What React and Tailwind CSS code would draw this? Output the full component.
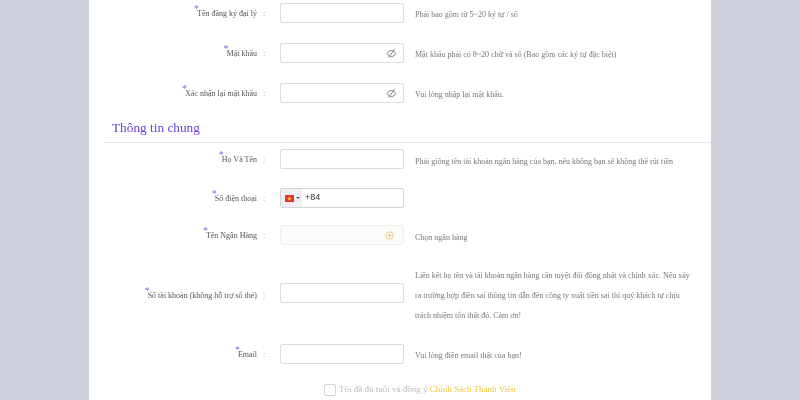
import React from 'react';

function EyeOff() {
  return (
    <svg width="11" height="11" viewBox="0 0 12 12" fill="none" stroke="#777" strokeWidth="1" className="shrink-0">
      <path d="M1.200 6c1.300-2.200 2.900-3.300 4.800-3.300s3.500 1.100 4.800 3.300c-1.300 2.200-2.900 3.300-4.800 3.300S2.500 8.200 1.200 6z" />
      <path d="M9.300 1.500 2.700 10.500" />
    </svg>
  );
}

function PlusCircle() {
  return (
    <svg width="9" height="9" viewBox="0 0 9 9" fill="none" stroke="#f3c27c" strokeWidth="0.9">
      <circle cx="4.500" cy="4.500" r="3.700" />
      <path d="M4.500 2.300v4.400M2.300 4.500h4.400" />
    </svg>
  );
}

function Flag() {
  return (
    <svg width="9" height="7" viewBox="0 0 9 7">
      <rect width="9" height="7" fill="#e8322c" />
      <path d="M4.500 1.300l.6 1.600h1.600l-1.300 1 .5 1.600-1.400-1-1.400 1 .5-1.600-1.300-1h1.600z" fill="#f9d648" />
    </svg>
  );
}

function Row({ label, hint, className = 'h-[20px]', hintClass = 'mt-[3px]', children }) {
  return (
    <div className={`flex items-center ${className}`}>
      <div className="w-[168px] mt-[2px] flex justify-end text-[8px] leading-[12px] text-[#555]">
        <span className="relative whitespace-nowrap">
          <span className="absolute left-[-3px] top-[-4px] text-[10px] leading-none text-[#7d6be0]">*</span>
          {label}
        </span>
      </div>
      <span className="w-[23px] mt-[2px] pl-[6px] text-[8px] text-[#999]">:</span>
      {children || <div className="w-[124px] h-[20px] shrink-0 border border-[#dcdcdc] rounded-[2px] bg-white" />}
      {hint && <p className={`ml-[11px] w-[278px] text-[8px] leading-[20px] text-[#777] ${hintClass}`}>{hint}</p>}
    </div>
  );
}

function PasswordBox() {
  return (
    <div className="w-[124px] h-[20px] shrink-0 border border-[#dcdcdc] rounded-[2px] bg-white flex items-center justify-end pr-[6px]">
      <EyeOff />
    </div>
  );
}

export default function App() {
  return (
    <div className="h-[400px] overflow-hidden bg-[#cfd0dd] font-['Liberation_Serif',serif]">
      <div className="w-[622px] h-[400px] ml-[89px] bg-white pt-[3px] blur-[0.35px]">
        <Row label="Tên đăng ký đại lý" hint="Phải bao gồm từ 5~20 ký tự / số" />
        <Row label="Mật khẩu" hint="Mật khẩu phải có 8~20 chữ và số (Bao gồm các ký tự đặc biệt)" hintClass="mt-[4px]" className="h-[20px] mt-[20px]">
          <PasswordBox />
        </Row>
        <Row label="Xác nhận lại mật khẩu" hint="Vui lòng nhập lại mật khẩu." hintClass="mt-[4px]" className="h-[20px] mt-[20px]">
          <PasswordBox />
        </Row>

        <h2 className="mt-[15px] ml-[23px] text-[13.300px] leading-[20px] text-[#6a3fe3]">Thông tin chung</h2>
        <div className="mt-[4px] ml-[15px] border-t border-[#e6e8ee]" />

        <Row label="Họ Và Tên" hint="Phải giống tên tài khoản ngân hàng của bạn, nếu không bạn sẽ không thể rút tiền" hintClass="mt-[5px]" className="h-[20px] mt-[6px]" />
        <Row label="Số điện thoại" className="h-[20px] mt-[19px]">
          <div className="w-[124px] h-[20px] shrink-0 border border-[#d4d4d4] rounded-[2px] bg-white flex items-center">
            <div className="w-[21px] h-full bg-[#f0f0f2] flex items-center pl-[4px] gap-[2px]">
              <Flag />
              <span className="w-0 h-0 border-x-[2px] border-x-transparent border-t-[2px] border-t-[#555]" />
            </div>
            <span className="ml-[3px] font-['Liberation_Sans',sans-serif] text-[9px] text-[#333]">+84</span>
          </div>
        </Row>
        <Row label="Tên Ngân Hàng" hint="Chọn ngân hàng" hintClass="mt-[6px]" className="h-[20px] mt-[17px]">
          <div className="w-[124px] h-[20px] shrink-0 border border-[#eeeeee] rounded-[3px] bg-[#fbfbf9] flex items-center justify-end pr-[9px]">
            <PlusCircle />
          </div>
        </Row>
        <Row
          label="Số tài khoản (không hỗ trợ sổ thẻ)"
          hint="Liên kết họ tên và tài khoản ngân hàng cần tuyệt đối đồng nhất và chính xác. Nếu xảy ra trường hợp điền sai thông tin dẫn đến công ty xuất tiền sai thì quý khách tự chịu trách nhiệm tổn thất đó. Cảm ơn!"
          hintClass="mt-[2px]"
          className="mt-[20px] h-[60px]"
        >
          <div className="w-[124px] h-[20px] mb-[4px] shrink-0 border border-[#dcdcdc] rounded-[2px] bg-white" />
        </Row>
        <Row label="Email" hint="Vui lòng điền email thật của bạn!" hintClass="mt-[4px]" className="h-[20px] mt-[19px]" />

        <div className="mt-[19px] ml-[235px] flex items-center gap-[3px] text-[9px] text-[#bbbbbb]">
          <span className="w-[12px] h-[12px] rounded-[2px] border border-[#d4d4d4] bg-white" />
          <span>
            Tôi đã đủ tuổi và đồng ý <span className="text-[#f5c542]">Chính Sách Thành Viên</span>
          </span>
        </div>
      </div>
    </div>
  );
}
